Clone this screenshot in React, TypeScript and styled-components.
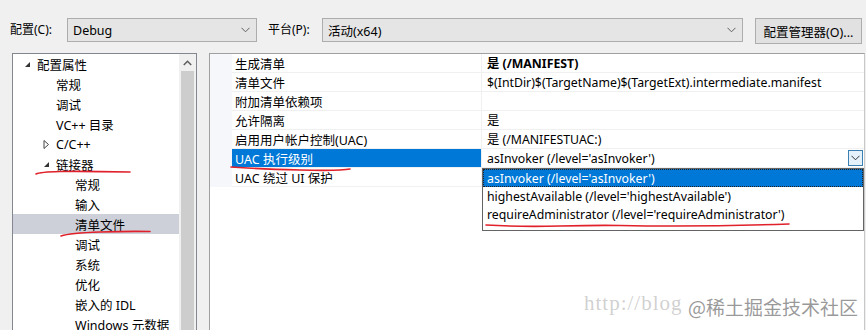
import React from "react";
import styled, { createGlobalStyle } from "styled-components";

const Global = createGlobalStyle`
  html, body { margin: 0; padding: 0; }
  body { background: #f0f0f0; }
  #root { width: 866px; height: 330px; overflow: hidden; position: relative; }
`;

const FONT = `"Segoe UI", "Noto Sans", "Noto Sans CJK SC", sans-serif`;

const Page = styled.div`
  width: 866px;
  height: 330px;
  background: #f0f0f0;
  font-family: ${FONT};
  font-size: 12px;
  color: #000;
  display: flex;
  flex-direction: column;
  position: relative;
`;

const TopBar = styled.div`
  height: 53px;
  box-sizing: border-box;
  padding: 18px 0 0 10px;
  display: flex;
  align-items: flex-start;
`;

const Label = styled.span<{ $w: number }>`
  width: ${(p) => p.$w}px;
  height: 24px;
  line-height: 24px;
  white-space: nowrap;
`;

const Combo = styled.div<{ $w: number; $mr: number }>`
  width: ${(p) => p.$w}px;
  margin-right: ${(p) => p.$mr}px;
  height: 24px;
  box-sizing: border-box;
  border: 1px solid #adadad;
  background: #e5e5e5;
  display: flex;
  align-items: center;
  padding: 0 6px 0 5px;
  font-size: 12.5px;
`;

const ComboText = styled.span`
  flex: 1;
`;

const Chevron = ({ color = "#606060" }: { color?: string }) => (
  <svg width="9" height="6" viewBox="0 0 9 6">
    <path d="M0.5 0.8 L4.5 4.8 L8.5 0.8" fill="none" stroke={color} strokeWidth="1" />
  </svg>
);

const Button = styled.div`
  width: 107px;
  height: 26px;
  box-sizing: border-box;
  border: 1px solid #adadad;
  background: #e1e1e1;
  display: flex;
  align-items: center;
  justify-content: center;
  font-size: 12.5px;
`;

const Main = styled.div`
  flex: 1;
  display: flex;
  padding-left: 12px;
  gap: 12px;
  min-height: 0;
`;

const TreePanel = styled.div`
  width: 185px;
  height: 290px;
  box-sizing: border-box;
  border: 1px solid #828790;
  background: #fff;
  display: flex;
`;

const TreeList = styled.div`
  flex: 1;
  display: flex;
  flex-direction: column;
`;

const TreeRow = styled.div<{ $level: number; $sel?: boolean }>`
  height: 20px;
  flex: none;
  display: flex;
  align-items: center;
  padding-left: ${(p) => 11 + p.$level * 19}px;
  background: ${(p) => (p.$sel ? "#cdd0d8" : "transparent")};
  white-space: nowrap;
  font-size: 12.5px;
`;

const Twisty = styled.span`
  width: 13px;
  display: flex;
  align-items: center;
`;

const ScrollBar = styled.div`
  width: 17px;
  background: #f0f0f0;
  display: flex;
  flex-direction: column;
`;

const ScrollArrow = styled.div`
  height: 17px;
  display: flex;
  align-items: center;
  justify-content: center;
`;

const ScrollThumb = styled.div`
  flex: 1;
  margin: 0 2px;
  background: #cdcdcd;
`;

const GridPanel = styled.div`
  flex: 1;
  height: 290px;
  margin-right: 1px;
  box-sizing: border-box;
  border: 1px solid #a0a0a0;
  border-right-color: #c8c8c8;
  background: #fff;
  position: relative;
`;

const GridRow = styled.div`
  display: flex;
  height: 19px;
`;

const Gutter = styled.div`
  width: 22px;
  background: #f5f7fa;
`;

const NameCell = styled.div<{ $sel?: boolean }>`
  width: 250px;
  box-sizing: border-box;
  padding-left: 3px;
  display: flex;
  align-items: center;
  border-bottom: 1px solid #f0f0f0;
  border-right: 1px solid #f0f0f0;
  background: ${(p) => (p.$sel ? "#0078d7" : "#fff")};
  color: ${(p) => (p.$sel ? "#fff" : "#000")};
  white-space: nowrap;
  font-size: 12.5px;
`;

const ValueCell = styled.div<{ $bold?: boolean }>`
  flex: 1;
  box-sizing: border-box;
  padding-left: 5px;
  display: flex;
  align-items: center;
  border-bottom: 1px solid #f0f0f0;
  font-weight: ${(p) => (p.$bold ? 700 : 400)};
  white-space: nowrap;
  font-size: 12.3px;
`;

const ValueText = styled.span`
  flex: 1;
`;

const DropButton = styled.div`
  width: 15px;
  height: 16px;
  box-sizing: border-box;
  margin-right: 1px;
  border: 1px solid #3c7fb1;
  background: #e5f1fb;
  display: flex;
  align-items: center;
  justify-content: center;
`;

const DropList = styled.div`
  position: absolute;
  left: 272px;
  top: 114px;
  width: 382px;
  height: 63px;
  box-sizing: border-box;
  border: 1px solid #646464;
  background: #fff;
  display: flex;
  flex-direction: column;
  z-index: 2;
`;

const DropItem = styled.div<{ $sel?: boolean }>`
  height: 18px;
  box-sizing: border-box;
  padding-left: 3px;
  display: flex;
  align-items: center;
  background: ${(p) => (p.$sel ? "#0078d7" : "#fff")};
  color: ${(p) => (p.$sel ? "#fff" : "#000")};
  border: 1px dotted ${(p) => (p.$sel ? "#222" : "transparent")};
  white-space: nowrap;
  font-size: 12.3px;
`;

const Marks = styled.svg`
  position: absolute;
  left: 0;
  top: 0;
  pointer-events: none;
  z-index: 3;
`;

const Watermark = styled.div`
  position: absolute;
  left: 584px;
  top: 291px;
  z-index: 4;
  white-space: nowrap;
`;

const WmUrl = styled.span`
  font-family: "Liberation Serif", "DejaVu Serif", serif;
  font-size: 21px;
  letter-spacing: 1px;
  color: rgba(150, 150, 150, 0.45);
`;

const BrandLayer = styled.div`
  position: absolute;
  left: 688px;
  top: 293px;
  z-index: 5;
  white-space: nowrap;
`;

const WmBrand = styled.span`
  font-family: "Noto Sans CJK SC", sans-serif;
  font-size: 19px;
  color: rgba(120, 120, 120, 0.75);
  text-shadow: 0 0 2px #fff, 0 0 2px #fff;
`;

const Triangle = ({ open }: { open: boolean }) =>
  open ? (
    <svg width="7" height="7" viewBox="0 0 7 7">
      <path d="M6 1 L6 6 L1 6 Z" fill="#333" />
    </svg>
  ) : (
    <svg width="7" height="9" viewBox="0 0 7 9">
      <path d="M1 0.5 L5.5 4.5 L1 8.5 Z" fill="none" stroke="#444" strokeWidth="1" />
    </svg>
  );

const tree: { t: string; l: number; tw?: "open" | "closed"; sel?: boolean }[] = [
  { t: "配置属性", l: 0, tw: "open" },
  { t: "常规", l: 1 },
  { t: "调试", l: 1 },
  { t: "VC++ 目录", l: 1 },
  { t: "C/C++", l: 1, tw: "closed" },
  { t: "链接器", l: 1, tw: "open" },
  { t: "常规", l: 2 },
  { t: "输入", l: 2 },
  { t: "清单文件", l: 2, sel: true },
  { t: "调试", l: 2 },
  { t: "系统", l: 2 },
  { t: "优化", l: 2 },
  { t: "嵌入的 IDL", l: 2 },
  { t: "Windows 元数据", l: 2 },
];

const rows: { n: string; v: string; bold?: boolean; sel?: boolean }[] = [
  { n: "生成清单", v: "是 (/MANIFEST)", bold: true },
  { n: "清单文件", v: "$(IntDir)$(TargetName)$(TargetExt).intermediate.manifest" },
  { n: "附加清单依赖项", v: "" },
  { n: "允许隔离", v: "是" },
  { n: "启用用户帐户控制(UAC)", v: "是 (/MANIFESTUAC:)" },
  { n: "UAC 执行级别", v: "asInvoker (/level='asInvoker')", sel: true },
  { n: "UAC 绕过 UI 保护", v: "" },
];

export default function App() {
  return (
    <Page>
      <Global />
      <TopBar>
        <Label $w={57}>配置(C):</Label>
        <Combo $w={190} $mr={11}>
          <ComboText>Debug</ComboText>
          <Chevron />
        </Combo>
        <Label $w={54}>平台(P):</Label>
        <Combo $w={421} $mr={12}>
          <ComboText>活动(x64)</ComboText>
          <Chevron />
        </Combo>
        <Button>配置管理器(O)...</Button>
      </TopBar>
      <Main>
        <TreePanel>
          <TreeList>
            {tree.map((r, i) => (
              <TreeRow key={i} $level={r.l} $sel={r.sel}>
                <Twisty>{r.tw ? <Triangle open={r.tw === "open"} /> : null}</Twisty>
                {r.t}
              </TreeRow>
            ))}
          </TreeList>
          <ScrollBar>
            <ScrollArrow>
              <svg width="9" height="6" viewBox="0 0 9 6">
                <path d="M0.8 5 L4.5 1.3 L8.2 5" fill="none" stroke="#606060" strokeWidth="1.6" />
              </svg>
            </ScrollArrow>
            <ScrollThumb />
          </ScrollBar>
        </TreePanel>
        <GridPanel>
          {rows.map((r, i) => (
            <GridRow key={i}>
              <Gutter />
              <NameCell $sel={r.sel}>{r.n}</NameCell>
              <ValueCell $bold={r.bold}>
                <ValueText>{r.v}</ValueText>
                {r.sel ? (
                  <DropButton>
                    <Chevron color="#333" />
                  </DropButton>
                ) : null}
              </ValueCell>
            </GridRow>
          ))}
          <DropList>
            <DropItem $sel>asInvoker (/level='asInvoker')</DropItem>
            <DropItem>highestAvailable (/level='highestAvailable')</DropItem>
            <DropItem>requireAdministrator (/level='requireAdministrator')</DropItem>
          </DropList>
        </GridPanel>
      </Main>
      <Marks width="866" height="330" viewBox="0 0 866 330">
        <g fill="none" stroke="#e0202a" strokeWidth="1.6" strokeLinecap="round">
          <path d="M36 174 Q40 172 60 171.5 T130 172" />
          <path d="M61 236 Q70 233 100 232 T150 231.5" />
          <path d="M231 167 Q260 169 300 170 T350 169" />
          <path d="M486 225 Q520 227 560 226 T620 225.5 Q700 227 789 224" />
        </g>
      </Marks>
      <Watermark>
        <WmUrl>http://blog</WmUrl>
      </Watermark>
      <BrandLayer>
        <WmBrand>@稀土掘金技术社区</WmBrand>
      </BrandLayer>
    </Page>
  );
}
